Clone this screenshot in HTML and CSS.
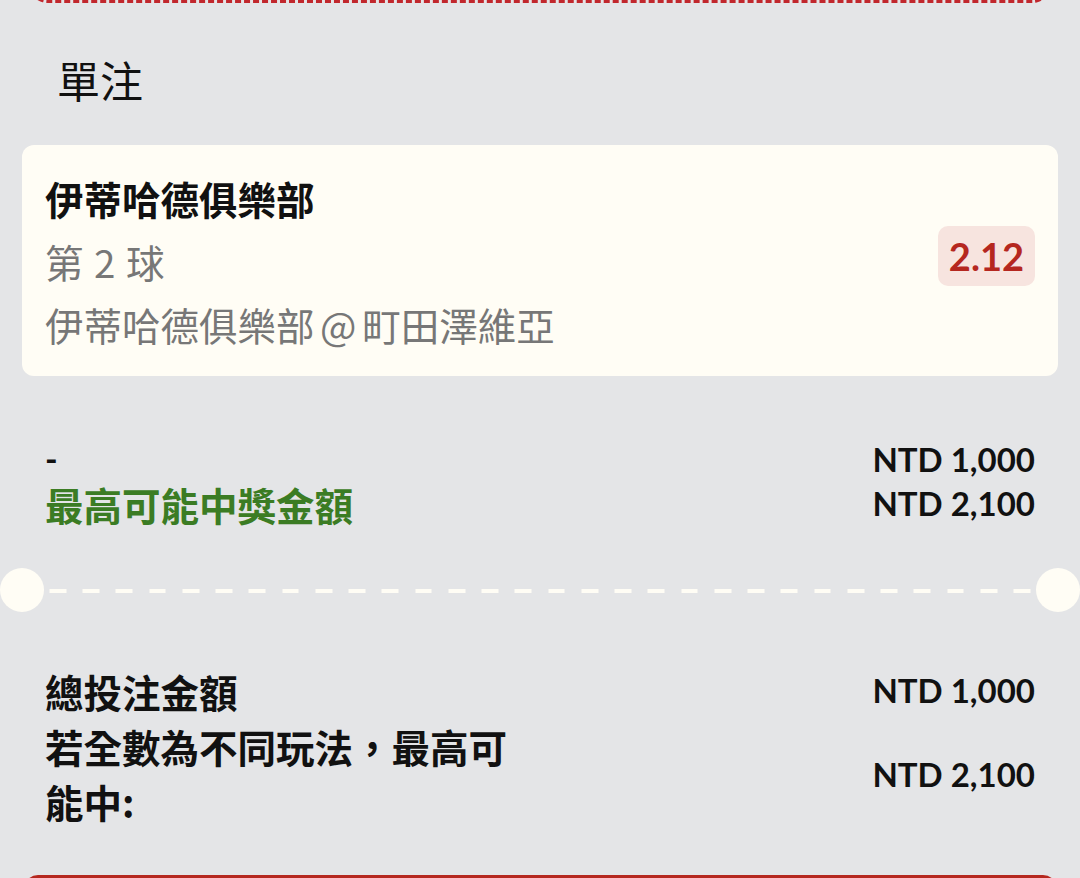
FILE: index.html
```html
<!DOCTYPE html>
<html lang="zh-Hant">
<head>
<meta charset="utf-8">
<title>單注</title>
<link rel="stylesheet" href="styles.css">
</head>
<body>
<div class="page">
  <div class="prev-box"></div>
  <h2 class="section-title">單注</h2>

  <div class="bet-card">
    <div class="bet-info">
      <div class="bet-team">伊蒂哈德俱樂部</div>
      <div class="bet-market">第 2 球</div>
      <div class="bet-match">伊蒂哈德俱樂部 @ 町田澤維亞</div>
    </div>
    <div class="odds-badge">2.12</div>
  </div>

  <div class="summary">
    <div class="sum-row">
      <span class="stake-dash">-</span>
      <span class="amount">NTD 1,000</span>
    </div>
    <div class="sum-row">
      <span class="win-label">最高可能中獎金額</span>
      <span class="amount">NTD 2,100</span>
    </div>
  </div>

  <div class="separator">
    <span class="notch"></span>
    <span class="dash-line"></span>
    <span class="notch"></span>
  </div>

  <div class="totals">
    <div class="total-row">
      <span class="total-label">總投注金額</span>
      <span class="amount">NTD 1,000</span>
    </div>
    <div class="total-row">
      <span class="total-label">若全數為不同玩法，最高可能中:</span>
      <span class="amount">NTD 2,100</span>
    </div>
  </div>

  <div class="place-btn"></div>
</div>
</body>
</html>
```

FILE: styles.css
```css
html, body {
  margin: 0;
  padding: 0;
  background: #e4e5e7;
}

.page {
  height: 878px;
  overflow: hidden;
  padding: 0 22px;
  box-sizing: border-box;
  font-family: "Noto Sans CJK TC", "Noto Sans", sans-serif;
  color: #111;
}

.prev-box {
  height: 40px;
  margin: -37px 6px 0;
  border: 3px dashed #c1272d;
  border-radius: 22px;
  box-sizing: border-box;
}

.section-title {
  margin: 46px 0 36px;
  padding-left: 35px;
  font-size: 43px;
  line-height: 60px;
  font-weight: 400;
  color: #111;
}

.bet-card {
  display: flex;
  justify-content: space-between;
  align-items: center;
  background: #fffdf5;
  border-radius: 12px;
  padding: 22px 23px 20px 23px;
}

.bet-info {
  font-size: 38.5px;
  line-height: 63px;
}

.bet-team {
  font-weight: 700;
  color: #111;
}

.bet-market,
.bet-match {
  color: #777;
  font-weight: 400;
}

.bet-market {
  word-spacing: 2px;
}

.bet-match {
  word-spacing: -3px;
}

.odds-badge {
  margin-bottom: 11px;
  height: 60px;
  padding: 0 11px;
  display: flex;
  align-items: center;
  background: #f7e4df;
  border-radius: 10px;
  color: #b5271f;
  font-family: "Lato", "Liberation Sans", sans-serif;
  font-weight: 700;
  font-size: 38px;
}

.summary {
  margin-top: 61px;
  padding: 0 23px;
}

.sum-row {
  display: flex;
  justify-content: space-between;
  align-items: center;
  height: 44px;
}

.stake-dash {
  font-family: "Lato", "Liberation Sans", sans-serif;
  font-weight: 700;
  font-size: 34px;
  line-height: 44px;
}

.win-label {
  font-weight: 700;
  font-size: 38.5px;
  line-height: 44px;
  color: #3b7c24;
  padding-top: 2px;
}

.amount {
  font-family: "Lato", "Liberation Sans", sans-serif;
  font-weight: 700;
  font-size: 33px;
  line-height: 44px;
  color: #111;
  white-space: nowrap;
}

.separator {
  display: flex;
  align-items: center;
  margin: 43px -22px 0;
  height: 44px;
}

.notch {
  width: 44px;
  height: 44px;
  border-radius: 50%;
  background: #fffdf5;
  flex: 0 0 44px;
}

.dash-line {
  flex: 1;
  height: 4px;
  margin: 1px 4px 0;
  background-image: repeating-linear-gradient(90deg, #fffdf5 0 16.6px, transparent 16.6px 33.25px);
  background-position: 1.5px 0;
}

.totals {
  margin-top: 52px;
  padding: 0 23px;
}

.total-row {
  display: flex;
  justify-content: space-between;
  align-items: center;
}

.total-row:first-child .amount {
  margin-top: -3px;
}

.total-label {
  width: 495px;
  font-weight: 700;
  font-size: 38.5px;
  line-height: 55px;
  color: #111;
}

.place-btn {
  margin: 46px 1px 0 2px;
  height: 120px;
  background: #b5281f;
  border-radius: 14px;
}
```
